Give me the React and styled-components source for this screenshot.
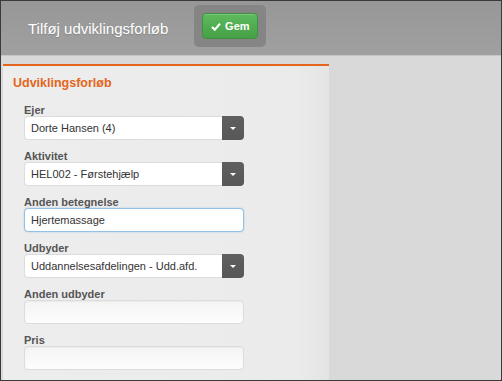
import React from 'react';
import styled, { createGlobalStyle } from 'styled-components';

const GlobalStyle = createGlobalStyle`
  html, body {
    margin: 0;
    padding: 0;
  }
  body {
    font-family: 'Liberation Sans', Arial, sans-serif;
    background: #3a3a3a;
  }
`;

const Frame = styled.div`
  box-sizing: border-box;
  width: 502px;
  height: 381px;
  border: 1px solid #3a3a3a;
  background: #d9d9d9;
  overflow: hidden;
  display: flex;
  flex-direction: column;
`;

const Header = styled.header`
  height: 54px;
  flex: none;
  display: flex;
  align-items: center;
  padding-left: 27px;
  background: linear-gradient(#979797, #a0a0a0);
  border-bottom: 1px solid #c6c6c6;
`;

const Title = styled.h1`
  margin: 0 26px 0 0;
  font-size: 15px;
  font-weight: normal;
  color: #fff;
  text-shadow: 0 1px 1px rgba(0, 0, 0, 0.15);
`;

const ActionBox = styled.div`
  margin-top: -4px;
  padding: 8px;
  border-radius: 5px;
  background: #858585;
`;

const SaveButton = styled.button`
  display: flex;
  align-items: center;
  justify-content: center;
  gap: 4px;
  box-sizing: border-box;
  width: 56px;
  height: 26px;
  padding: 0;
  border: 1px solid #3f913f;
  border-radius: 4px;
  background: linear-gradient(#5dba5d, #46a046);
  color: #fff;
  font-family: inherit;
  font-size: 11px;
  font-weight: bold;
  box-shadow: inset 0 1px 0 rgba(255, 255, 255, 0.2);
`;

const Body = styled.main`
  flex: 1;
  display: flex;
  padding: 8px 0 0 2px;
  background: #d9d9d9;
`;

const Panel = styled.section`
  width: 316px;
  border-top: 2px solid #e4661e;
  background: linear-gradient(90deg, #ededed, #ebebeb 90%, #e4e4e4);
  padding: 9px 0 0 10px;
`;

const PanelTitle = styled.h2`
  margin: 0 0 13px;
  font-size: 12.5px;
  line-height: 16px;
  font-weight: bold;
  color: #e3661b;
`;

const Fields = styled.div`
  padding-left: 11px;
`;

const Field = styled.div`
  margin-bottom: 10px;
`;

const Label = styled.label`
  display: block;
  font-size: 11px;
  line-height: 12px;
  font-weight: bold;
  color: #555;
`;

const SelectWrap = styled.div`
  display: flex;
  width: 220px;
  height: 24px;
`;

const SelectValue = styled.div`
  flex: 1;
  box-sizing: border-box;
  display: flex;
  align-items: center;
  padding-left: 6px;
  background: #fff;
  border: 1px solid #dcdcdc;
  border-right: none;
  border-radius: 4px 0 0 4px;
  font-size: 11px;
  color: #333;
`;

const SelectToggle = styled.div`
  width: 22px;
  display: flex;
  align-items: center;
  justify-content: center;
  background: linear-gradient(#5f5f5f, #575757);
  border-radius: 0 4px 4px 0;
  &::after {
    content: '';
    border-left: 3px solid transparent;
    border-right: 3px solid transparent;
    border-top: 3px solid #fff;
  }
`;

const TextInput = styled.div`
  box-sizing: border-box;
  width: 220px;
  height: 24px;
  display: flex;
  align-items: center;
  padding-left: 6px;
  border: 1px solid ${({ focused }) => (focused ? '#92c1e6' : '#dcdcdc')};
  border-radius: 4px;
  background: ${({ focused }) =>
    focused ? '#fff' : 'linear-gradient(#f4f4f4, #fdfdfd)'};
  box-shadow: ${({ focused }) =>
    focused ? '0 0 2px rgba(102, 175, 233, 0.5)' : 'inset 0 1px 1px rgba(0,0,0,0.04)'};
  font-size: 11px;
  color: #333;
`;

const Check = () => (
  <svg width="10" height="9" viewBox="0 0 10 9">
    <path d="M1 5 L3.8 7.6 L9 1.6" fill="none" stroke="#fff" strokeWidth="2.2" />
  </svg>
);

const fields = [
  { label: 'Ejer', type: 'select', value: 'Dorte Hansen (4)' },
  { label: 'Aktivitet', type: 'select', value: 'HEL002 - Førstehjælp' },
  { label: 'Anden betegnelse', type: 'text', value: 'Hjertemassage', focused: true },
  { label: 'Udbyder', type: 'select', value: 'Uddannelsesafdelingen - Udd.afd.' },
  { label: 'Anden udbyder', type: 'text', value: '' },
  { label: 'Pris', type: 'text', value: '' },
  { label: 'Type', type: 'select', value: '' },
];

export default function App() {
  return (
    <>
      <GlobalStyle />
      <Frame>
        <Header>
          <Title>Tilføj udviklingsforløb</Title>
          <ActionBox>
            <SaveButton>
              <Check />
              Gem
            </SaveButton>
          </ActionBox>
        </Header>
        <Body>
          <Panel>
            <PanelTitle>Udviklingsforløb</PanelTitle>
            <Fields>
              {fields.map((f) => (
                <Field key={f.label}>
                  <Label>{f.label}</Label>
                  {f.type === 'select' ? (
                    <SelectWrap>
                      <SelectValue>{f.value}</SelectValue>
                      <SelectToggle />
                    </SelectWrap>
                  ) : (
                    <TextInput focused={f.focused}>{f.value}</TextInput>
                  )}
                </Field>
              ))}
            </Fields>
          </Panel>
        </Body>
      </Frame>
    </>
  );
}
